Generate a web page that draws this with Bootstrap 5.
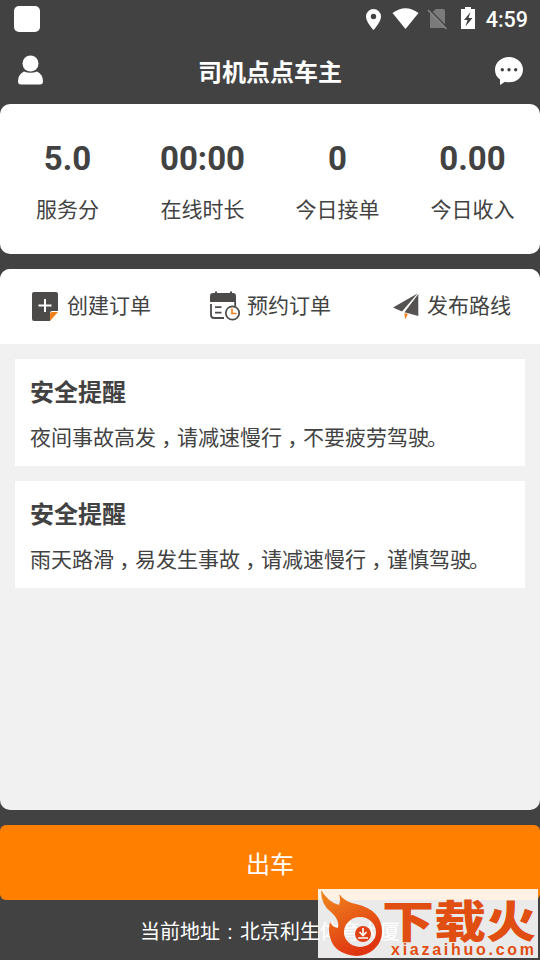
<!DOCTYPE html>
<html lang="zh-CN">
<head>
<meta charset="utf-8">
<meta name="viewport" content="width=device-width, initial-scale=1">
<title>司机点点车主</title>
<link href="https://cdn.jsdelivr.net/npm/bootstrap@5.3.0/dist/css/bootstrap.min.css" rel="stylesheet">
<style>
body{font-family:Roboto,"Noto Sans CJK SC",sans-serif;background:#424242;color:#424242;font-size:21px;line-height:30px}
.screen{height:960px;overflow:hidden}
.status{height:38px;padding:0 12px 0 14px;color:#fff}
.app-dot{width:26px;height:26px;border-radius:5px;background:#fff}
.clock{font-size:21.5px;font-weight:500;line-height:38px;padding-top:2px}
.topbar{height:66px;padding:0 16px}
.title{font-size:24px;font-weight:700;color:#fff;padding-top:3px}
.panel{border-radius:10px;background:#fff}
.stats{height:150px;padding-top:36px;margin-bottom:15px}
.figure-num{font-size:33px;line-height:38px;font-weight:700;margin-bottom:17px}
.main-panel{height:541px;background:#f1f1f1;overflow:hidden;margin-bottom:15px}
.actions{height:75px;background:#fff}
.actions .col{gap:7px;padding-left:1px}
.actions .col span{padding-bottom:1px}
.notices{padding:15px;gap:15px}
.notice{height:107px;padding:19px 15px 0;background:#fff}
.notice h2{font-size:24px;line-height:30px;font-weight:700;margin:0 0 15px}
.comma{display:inline-block;width:21px;text-align:center;font-feature-settings:"halt"}
.stop{display:inline-block;width:21px;margin-left:-2px}
.go{height:75px;border-radius:6px;background:#ff8000;color:#fff;font-size:24px;border:0;padding:4px 0 0}
.address{height:60px;color:#fff;font-size:20px;padding:3px 0 0 140px}
.colon{display:inline-block;width:20px;text-align:center}
.brand{left:318px;top:889px;width:220px;height:69px;background:rgba(255,255,255,.89)}
svg{display:block;flex:none}
.brand svg{overflow:visible}
</style>
</head>
<body>
<div class="screen d-flex flex-column position-relative">
  <div class="status d-flex align-items-center justify-content-between">
    <div class="app-dot"></div>
    <div class="d-flex align-items-center">
      <svg width="122" height="38" viewBox="364 0 122 38">
        <path fill="#fff" fill-rule="evenodd" d="M373.500 9a7.500 7.500 0 0 0-7.500 7.500c0 5.500 7.500 13.500 7.500 13.500s7.500-8 7.500-13.500A7.500 7.500 0 0 0 373.500 9zm0 4.800a2.700 2.700 0 1 1 0 5.400a2.700 2.700 0 0 1 0-5.400z"/>
        <path fill="#fff" d="M392.500 13Q405.500 3.500 418.500 13L405.500 29z"/>
        <path fill="#7b7b7b" d="M436 9h7q2 0 2 2v17h-15V14z"/>
        <path d="M429 9l18.500 19" stroke="#424242" stroke-width="1.500"/><path d="M428 10l18.500 19" stroke="#858585" stroke-width="1.700"/>
        <path fill="#fff" d="M465 7h6v2h4v20h-14V9h4z"/>
        <path fill="#424242" d="M470.500 12l-6.500 8h3.500l-2 6.500 7-8.500h-4z"/>
      </svg>
      <span class="clock">4:59</span>
    </div>
  </div>
  <header class="topbar d-flex align-items-center justify-content-between">
    <svg width="30" height="34" viewBox="0 0 30 34" fill="#fff"><circle cx="14.500" cy="9.500" r="8"/><path d="M8 17.500q6.500 2.500 13 0q6 3 6 10q0 3-3 3H5q-3 0-3-3q0-7 6-10z"/></svg>
    <span class="title">司机点点车主</span>
    <svg width="30" height="30" viewBox="0 0 30 30"><path fill="#fff" d="M15 1c7.800 0 14 5.600 14 12.700s-6.200 12.600-14 12.600q-2 0-4-.6L6 29v-5.500C2.500 21 1 17.500 1 13.700 1 6.600 7.200 1 15 1z"/><g fill="#424242"><circle cx="8.300" cy="13.700" r="1.700"/><circle cx="15" cy="13.700" r="1.700"/><circle cx="21.700" cy="13.700" r="1.700"/></g></svg>
  </header>
  <section class="panel stats">
    <div class="row g-0 text-center">
      <div class="col"><div class="figure-num">5.0</div>服务分</div>
      <div class="col"><div class="figure-num">00:00</div>在线时长</div>
      <div class="col"><div class="figure-num">0</div>今日接单</div>
      <div class="col"><div class="figure-num">0.00</div>今日收入</div>
    </div>
  </section>
  <main class="panel main-panel">
    <div class="actions row g-0">
      <div class="col d-flex align-items-center justify-content-center">
        <svg width="30" height="34" viewBox="0 0 30 34"><path fill="#4d4b4a" d="M4 2h22q2 0 2 2v17h-6q-2 0-2 2v8H4q-2 0-2-2V4q0-2 2-2z"/><path d="M15 9v13M8.500 15.500h13" stroke="#fff" stroke-width="2"/><path fill="#f08019" d="M20 31v-7q0-2 2-2h6z"/></svg>
        <span>创建订单</span>
      </div>
      <div class="col d-flex align-items-center justify-content-center">
        <svg width="30" height="34" viewBox="0 0 30 34"><path fill="#4d4b4a" d="M0 12V6q0-3 3-3h2V1.500h2V3h13V1.500h2V3h1q3 0 3 3v6z"/><path d="M1 14v11q0 3 3 3h10M5 17.200h6.500M5 22.700h6.500M25.200 12v4" fill="none" stroke="#4d4b4a" stroke-width="1.800"/><circle cx="22.500" cy="23" r="6.700" fill="#fff" stroke="#4d4b4a" stroke-width="1.700"/><path d="M22 18.500v5h4.500" fill="none" stroke="#f08019" stroke-width="1.700"/></svg>
        <span>预约订单</span>
      </div>
      <div class="col d-flex align-items-center justify-content-center">
        <svg width="30" height="34" viewBox="0 0 30 34"><path fill="#565251" d="M27.500 3.500L3 17.500l9 4zM28.300 4v22L14.500 22.200z"/><path fill="#f08019" d="M14.500 23l3.500 1-3 5.500z"/></svg>
        <span>发布路线</span>
      </div>
    </div>
    <div class="notices d-flex flex-column">
      <article class="notice"><h2>安全提醒</h2><div>夜间事故高发<span class="comma">，</span>请减速慢行<span class="comma">，</span>不要疲劳驾驶<span class="stop">。</span></div></article>
      <article class="notice"><h2>安全提醒</h2><div>雨天路滑<span class="comma">，</span>易发生事故<span class="comma">，</span>请减速慢行<span class="comma">，</span>谨慎驾驶<span class="stop">。</span></div></article>
    </div>
  </main>
  <button class="go w-100">出车</button>
  <footer class="address d-flex align-items-center"><span>当前地址<span class="colon">:</span>北京利生体育大厦</span></footer>
  <div class="brand position-absolute">
    <svg width="220" height="69" viewBox="0 0 220 69">
      <defs><linearGradient id="flame" x2=".5" y2="1"><stop stop-color="#f08a20"/><stop offset="1" stop-color="#df3510"/></linearGradient></defs>
      <path fill="url(#flame)" fill-rule="evenodd" d="M3 1Q10 13 21 16Q23 11 21 5Q27 13 38 15Q64 21 64 43A26 24 0 0 1 38 67Q16 65 12 48Q10 41 12 33Q14 38 20 39Q22 31 13 23Q3 16 3 1zM42 28a16 15 0 1 0 0 30a16 15 0 1 0 0-30z"/>
      <circle cx="45" cy="45" r="8" fill="#df4215"/><path d="M45 39v7M41.500 43l3.500 3.500 3.500-3.500M40 49h10" fill="none" stroke="#fff" stroke-width="1.600"/>
      <g fill="#e04e12" font-family="'Noto Sans CJK SC',sans-serif" font-weight="900" font-size="44">
        <text x="64" y="49" textLength="104" lengthAdjust="spacingAndGlyphs">下载</text>
        <text x="168" y="49" textLength="50" lengthAdjust="spacingAndGlyphs">火</text>
      </g>
      <text x="73" y="65.500" font-family="'Liberation Sans',sans-serif" font-weight="700" font-size="16" fill="#e04e12" textLength="143" lengthAdjust="spacing">xiazaihuo.com</text>
    </svg>
  </div>
</div>
<script src="https://cdn.jsdelivr.net/npm/bootstrap@5.3.0/dist/js/bootstrap.bundle.min.js"></script>
</body>
</html>
